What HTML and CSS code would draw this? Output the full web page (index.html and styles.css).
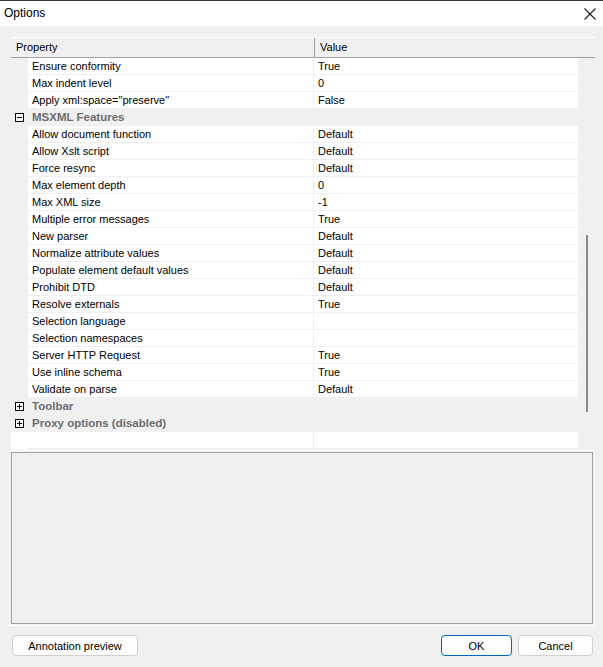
FILE: index.html
```html
<!DOCTYPE html>
<html>
<head>
<meta charset="utf-8">
<link rel="stylesheet" href="styles.css">
</head>
<body>
<div class="window">
  <div class="titlebar">
    <span class="title">Options</span>
    <svg class="close" width="12" height="12" viewBox="0 0 12 12"><path d="M0.5 0.5 L11.5 11.5 M11.5 0.5 L0.5 11.5" stroke="#1a1a1a" stroke-width="1.1" fill="none"/></svg>
  </div>
  <div class="content">
    <div class="grid">
      <div class="grid-head">
        <div class="hcell hname">Property</div>
        <div class="hcell hvalue">Value</div>
      </div>
      <div class="grid-body">
        <div class="rows">
          <div class="row"><div class="gutter"></div><div class="name">Ensure conformity</div><div class="value">True</div></div>
          <div class="row"><div class="gutter"></div><div class="name">Max indent level</div><div class="value">0</div></div>
          <div class="row"><div class="gutter"></div><div class="name">Apply xml:space="preserve"</div><div class="value">False</div></div>
          <div class="row cat"><div class="gutter"><span class="box minus"></span></div><div class="catname">MSXML Features</div></div>
          <div class="row"><div class="gutter"></div><div class="name">Allow document function</div><div class="value">Default</div></div>
          <div class="row"><div class="gutter"></div><div class="name">Allow Xslt script</div><div class="value">Default</div></div>
          <div class="row"><div class="gutter"></div><div class="name">Force resync</div><div class="value">Default</div></div>
          <div class="row"><div class="gutter"></div><div class="name">Max element depth</div><div class="value">0</div></div>
          <div class="row"><div class="gutter"></div><div class="name">Max XML size</div><div class="value">-1</div></div>
          <div class="row"><div class="gutter"></div><div class="name">Multiple error messages</div><div class="value">True</div></div>
          <div class="row"><div class="gutter"></div><div class="name">New parser</div><div class="value">Default</div></div>
          <div class="row"><div class="gutter"></div><div class="name">Normalize attribute values</div><div class="value">Default</div></div>
          <div class="row"><div class="gutter"></div><div class="name">Populate element default values</div><div class="value">Default</div></div>
          <div class="row"><div class="gutter"></div><div class="name">Prohibit DTD</div><div class="value">Default</div></div>
          <div class="row"><div class="gutter"></div><div class="name">Resolve externals</div><div class="value">True</div></div>
          <div class="row"><div class="gutter"></div><div class="name">Selection language</div><div class="value"></div></div>
          <div class="row"><div class="gutter"></div><div class="name">Selection namespaces</div><div class="value"></div></div>
          <div class="row"><div class="gutter"></div><div class="name">Server HTTP Request</div><div class="value">True</div></div>
          <div class="row"><div class="gutter"></div><div class="name">Use inline schema</div><div class="value">True</div></div>
          <div class="row"><div class="gutter"></div><div class="name">Validate on parse</div><div class="value">Default</div></div>
          <div class="row cat"><div class="gutter"><span class="box plus"></span></div><div class="catname">Toolbar</div></div>
          <div class="row cat"><div class="gutter"><span class="box plus"></span></div><div class="catname">Proxy options (disabled)</div></div>
          <div class="row empty"><div class="gutter"></div><div class="name"></div><div class="value"></div></div>
        </div>
        <div class="vscroll"><div class="thumb"></div></div>
      </div>
    </div>
    <div class="desc"></div>
    <div class="buttons">
      <button class="btn btn-annot">Annotation preview</button>
      <div class="spacer"></div>
      <button class="btn btn-ok">OK</button>
      <button class="btn btn-cancel">Cancel</button>
    </div>
  </div>
</div>
</body>
</html>
```

FILE: styles.css
```css
html, body {
  margin: 0;
  padding: 0;
}
body {
  width: 603px;
  height: 667px;
  overflow: hidden;
  background: #f0f0f0;
  font-family: "Liberation Sans", Arial, sans-serif;
  font-size: 11px;
  color: #000;
}
.window {
  width: 603px;
  height: 667px;
  box-sizing: border-box;
  border-top: 1px solid #3a3a3a;
  display: flex;
  flex-direction: column;
}
.titlebar {
  height: 25px;
  background: #fff;
  display: flex;
  align-items: center;
  padding: 0 7px 0 4px;
  flex-shrink: 0;
}
.title {
  font-size: 12px;
  flex: 1;
  margin-top: -1px;
}
.close {
  display: block;
}
.content {
  padding: 11px 8px 0 11px;
  display: flex;
  flex-direction: column;
}
.grid {
  width: 584px;
  height: 411px;
  display: flex;
  flex-direction: column;
}
.grid-head {
  height: 20px;
  border-top: 1px solid #fff;
  border-bottom: 1px solid #a0a0a0;
  display: flex;
  box-sizing: border-box;
  height: 21px;
}
.hcell {
  line-height: 19px;
  padding-left: 5px;
}
.hname {
  width: 298px;
  border-right: 1px solid #a0a0a0;
}
.hvalue {
  flex: 1;
  padding-left: 5px;
}
.grid-body {
  display: flex;
  flex: 1;
}
.rows {
  width: 567px;
  display: flex;
  flex-direction: column;
}
.row {
  display: flex;
  height: 17px;
}
.gutter {
  width: 17px;
  flex-shrink: 0;
  position: relative;
}
.name {
  width: 281px;
  padding-left: 4px;
  background: #fff;
  border-bottom: 1px solid #f0f0f0;
  line-height: 16px;
  white-space: nowrap;
}
.value {
  flex: 1;
  background: #fff;
  border-left: 1px solid #f0f0f0;
  border-bottom: 1px solid #f0f0f0;
  padding-left: 4px;
  line-height: 16px;
}
.cat .catname {
  flex: 1;
  padding-left: 4px;
  font-weight: bold;
  color: #6d6d6d;
  line-height: 16px;
  font-size: 11.5px;
}
.empty .gutter {
  background: #fff;
}
.empty .name, .empty .value {
  border-bottom: none;
  height: 16px;
}
.box {
  position: absolute;
  left: 4px;
  top: 4px;
  width: 9px;
  height: 9px;
  box-sizing: border-box;
  border: 1px solid #000;
  background: #fff;
}
.box::before {
  content: "";
  position: absolute;
  left: 1px;
  top: 3px;
  width: 5px;
  height: 1px;
  background: #000;
}
.plus::after {
  content: "";
  position: absolute;
  left: 3px;
  top: 1px;
  width: 1px;
  height: 5px;
  background: #000;
}
.vscroll {
  width: 17px;
  position: relative;
}
.thumb {
  position: absolute;
  left: 8px;
  top: 177px;
  width: 2px;
  height: 177px;
  background: #8b8b8b;
}
.desc {
  margin-top: 4px;
  width: 582px;
  height: 172px;
  box-sizing: border-box;
  border: 1px solid #a0a0a0;
  outline: 1px solid #fff;
  outline-offset: 1px;
}
.buttons {
  display: flex;
  margin-top: 11px;
  padding-right: 2px;
}
.spacer {
  flex: 1;
}
.btn {
  height: 21px;
  background: #fdfdfd;
  border: 1px solid #d0d0d0;
  border-radius: 4px;
  font-family: "Liberation Sans", Arial, sans-serif;
  font-size: 11px;
  color: #000;
  padding: 0;
}
.btn-annot {
  width: 126px;
  margin-left: 1px;
}
.btn-ok {
  width: 71px;
  border-color: #0067c0;
}
.btn-cancel {
  width: 75px;
  margin-left: 6px;
}
```
